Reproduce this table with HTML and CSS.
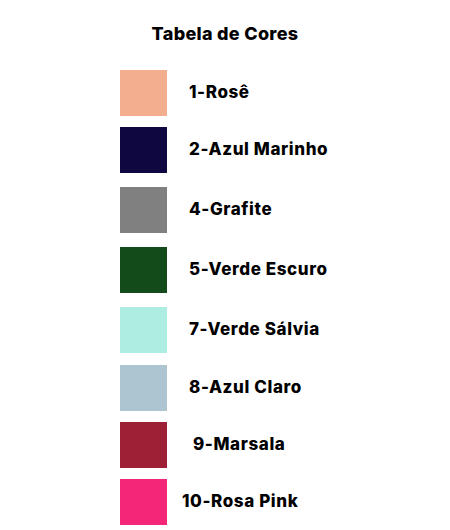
FILE: index.html
```html
<!DOCTYPE html>
<html lang="pt">
<head>
<meta charset="utf-8">
<title>Tabela de Cores</title>
<link rel="stylesheet" href="styles.css">
</head>
<body>
<h1 class="title">Tabela de Cores</h1>
<ul class="colors">
  <li class="row"><span class="swatch rose"></span><span class="label">1-Rosê</span></li>
  <li class="row"><span class="swatch navy"></span><span class="label">2-Azul Marinho</span></li>
  <li class="row gap3"><span class="swatch graphite"></span><span class="label">4-Grafite</span></li>
  <li class="row gap3"><span class="swatch green"></span><span class="label">5-Verde Escuro</span></li>
  <li class="row gap3"><span class="swatch sage"></span><span class="label">7-Verde Sálvia</span></li>
  <li class="row gap1"><span class="swatch lightblue"></span><span class="label">8-Azul Claro</span></li>
  <li class="row"><span class="swatch marsala"></span><span class="label shift-r">9-Marsala</span></li>
  <li class="row"><span class="swatch pink"></span><span class="label shift-l">10-Rosa Pink</span></li>
</ul>
</body>
</html>
```
FILE: styles.css
```css
html, body {
  margin: 0;
  padding: 0;
  background: #ffffff;
}
body {
  width: 450px;
  height: 530px;
  font-family: Inter, "Liberation Sans", sans-serif;
  color: #000000;
}
.title {
  margin: 0;
  padding-top: 23px;
  font-size: 18px;
  font-weight: 800;
  line-height: 22px;
  letter-spacing: 0.3px;
  text-align: center;
}
.colors {
  list-style: none;
  margin: 0;
  padding: 25px 0 0 120px;
  display: flex;
  flex-direction: column;
  gap: 11px;
}
.row {
  display: flex;
  align-items: center;
  gap: 22px;
  height: 46px;
}
.row.gap3 { margin-top: 3px; }
.row.gap1 { margin-top: 1px; }
.swatch {
  width: 47px;
  height: 46px;
  flex: none;
}
.label {
  font-size: 17px;
  font-weight: 800;
  line-height: 20px;
  letter-spacing: 0.6px;
  margin-top: -3px;
}
.label.shift-r { margin-left: 4px; }
.label.shift-l { margin-left: -7px; }
.rose { background: #f2ae8f; }
.navy { background: #0f0740; }
.graphite { background: #808080; }
.green { background: #134b1b; }
.sage { background: #aeeee2; }
.lightblue { background: #adc5d0; }
.marsala { background: #9e2037; }
.pink { background: #f42677; }
```
